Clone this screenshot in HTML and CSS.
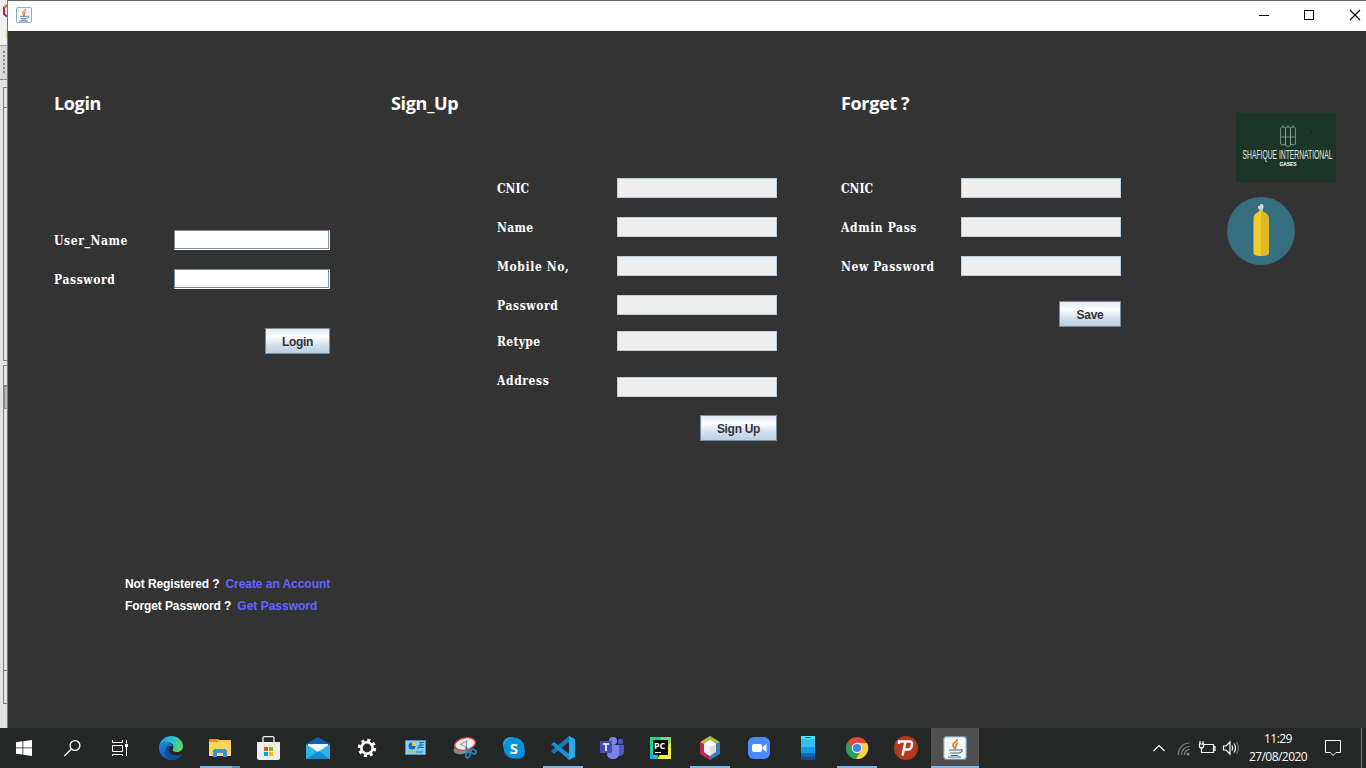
FILE: index.html
```html
<!DOCTYPE html>
<html lang="en">
<head>
<meta charset="utf-8">
<title>Login</title>
<link rel="stylesheet" href="styles.css">
</head>
<body>
<div class="desktop">
  <div class="behind">
    <div class="behind-menu"><svg width="7" height="45" viewBox="0 0 7 45"><path d="M7 5.500L4 7.500v6.500L7 16.500" fill="none" stroke="#c2185b" stroke-width="2"/><path d="M4 7l3-2.500" stroke="#a8b92e" stroke-width="2"/><path d="M7 30v8" stroke="#c6bd50"/></svg></div>
    <div class="behind-tools"><div class="grip"></div></div>
    <div class="pane pane-top"><div class="pane-head"></div></div>
    <div class="pane pane-bottom"><div class="pane-head"></div><div class="pane-tab"></div><div class="pane-body"></div></div>
  </div>
  <div class="window">
    <div class="titlebar">
      <svg class="app-icon" width="16" height="16" viewBox="0 0 24 24"><use href="#java"/></svg>
      <svg class="controls" width="108" height="30" viewBox="0 0 108 30" fill="none" stroke="#000" shape-rendering="crispEdges"><path d="M1 14.500h10M46.500 9.500h9v9h-9z"/><path d="M92 9l10 10M102 9l-10 10" shape-rendering="auto" stroke-width="1.100"/></svg>
    </div>
    <div class="content">
      <section class="login">
        <h2>Login</h2>
        <div class="row first"><label>User_Name</label><input class="field active"></div>
        <div class="row"><label>Password</label><input class="field active" type="password"></div>
        <button class="btn btn-login">Login</button>
        <div class="links">
          <p>Not Registered ?<a class="create">Create an Account</a></p>
          <p>Forget Password ?<a class="get">Get Password</a></p>
        </div>
      </section>
      <section class="signup">
        <h2>Sign_Up</h2>
        <div class="signup-form">
          <div class="row"><label class="caps">CNIC</label><input class="field" disabled></div>
          <div class="row"><label class="short">Name</label><input class="field" disabled></div>
          <div class="row"><label>Mobile No,</label><input class="field" disabled></div>
          <div class="row"><label>Password</label><input class="field" disabled></div>
          <div class="row tight"><label class="short">Retype</label><input class="field" disabled></div>
          <div class="row uneven"><label>Address</label><input class="field" disabled></div>
          <button class="btn btn-signup">Sign Up</button>
        </div>
      </section>
      <section class="forget">
        <h2>Forget ?</h2>
        <div class="forget-form">
          <div class="row"><label class="caps">CNIC</label><input class="field" disabled></div>
          <div class="row"><label>Admin Pass</label><input class="field" disabled></div>
          <div class="row"><label>New Password</label><input class="field" disabled></div>
          <button class="btn btn-save">Save</button>
        </div>
      </section>
      <aside class="brand">
        <svg class="brand-logo" width="100" height="69" viewBox="0 0 100 69">
          <rect width="100" height="69" fill="#1c3529"/>
          <g fill="none" stroke="#8fa99c" stroke-width=".8"><path d="M44.500 15.500q0-1.500 2.500-1.500t2.500 1.500v15.500q-2.500 2-5 0zM49.500 15.500q0-1.500 2.500-1.500t2.500 1.500v17q-2.500 2-5 0zM54.500 15.500q0-1.500 2.500-1.500t2.500 1.500v15.500q-2.500 2-5 0zM45 24h14M46 13h2M51 13h2M56 13h2"/></g>
          <circle cx="75.500" cy="18.500" r=".7" fill="#0b1912"/>
          <text class="brand-name" x="6.500" y="46" textLength="90" lengthAdjust="spacingAndGlyphs">SHAFIQUE INTERNATIONAL</text>
          <text class="brand-sub" x="43.500" y="53" textLength="17" lengthAdjust="spacing">GASES</text>
        </svg>
        <svg class="cylinder" width="68" height="68" viewBox="0 0 68 68"><circle cx="34" cy="34" r="34" fill="#367080"/><path d="M32.500 15V12l-3-1V9h3l1-2h2l1 2v2l-1 1v3z" fill="#cbd5da"/><path d="M29 9h2v3h-2z" fill="#53606a"/><path d="M34 13q-2 0-2.500 2-5 1.500-5 7v34q0 3 7.500 3z" fill="#efcb2c"/><path d="M34 13q2 0 2.500 2 5.500 1.500 5.500 7v34q0 3-8 3z" fill="#dcb827"/></svg>
      </aside>
    </div>
  </div>
  <div class="taskbar">
    <div class="task"><svg width="24" height="24" viewBox="0 0 24 24" fill="#fff"><path d="M4 6.300l6.500-1v6.200H4zM11.300 5.200L20 4v7.500h-8.700zM4 12.300h6.500v6.300L4 17.700zM11.300 12.300H20V20l-8.700-1.300z"/></svg></div>
    <div class="task"><svg width="24" height="24" viewBox="0 0 24 24" fill="none" stroke="#fff" stroke-width="1.300"><circle cx="15" cy="9.500" r="4.900"/><path d="M11.400 13L4.300 20"/></svg></div>
    <div class="task"><svg width="24" height="24" viewBox="0 0 24 24" fill="none" stroke="#fff"><path d="M4.500 4v2.500h10V4M4.500 9.500h10v6h-10zM4.500 20v-1.500h10V20M18.500 4v3.500M18.500 11v9"/><path d="M17 8h3v3h-3z" fill="#fff" stroke="none"/></svg></div>
    <div class="apps">
      <div class="task"><svg width="24" height="24" viewBox="0 0 24 24"><defs><linearGradient id="eg" x1="0" x2="1" y1=".5" y2=".7"><stop stop-color="#289dda"/><stop offset=".5" stop-color="#2bbfd2"/><stop offset="1" stop-color="#65d84b"/></linearGradient><linearGradient id="eb" y2="1" x2=".5"><stop stop-color="#178be0"/><stop offset="1" stop-color="#0c55ad"/></linearGradient></defs><path d="M0 11C1 4 6 0 12 0c7 0 12 5 12 10 0 4-3 6-6 6-3 0-5-1-4-3 2-4-2-7-7-7-4 0-6 2-7 5z" fill="url(#eg)"/><path d="M0 12c0-4 3-6 7-6 3 0 6 2 7 5-3-2-6-1-6 2 0 6 8 9 15 5-4 7-12 8-17 4-4-2-6-6-6-10z" fill="url(#eb)"/><path d="M8.500 10C4 14 6 22 13 24c4 0 8-2 10-6-5 3-12 1-13-3-.5-2 0-3 1-4z" fill="#104b96"/></svg></div>
      <div class="task open explorer"><svg width="24" height="24" viewBox="0 0 24 24"><path d="M1 3h9l1 1h12v16H1z" fill="#f7c64b"/><path d="M1 3h9v3H1z" fill="#df9812"/><path d="M1 6h22v14H1z" fill="#ffd569"/><path d="M5 21v-6q0-2 2-2h10q2 0 2 2v6h-4v-4H9v4z" fill="#3d94d2"/></svg></div>
      <div class="task"><svg width="24" height="24" viewBox="0 0 24 24"><path d="M6 7V2q0-1.400 1.500-1.400h8Q17 .6 17 2v5" fill="none" stroke="#eee" stroke-width="1.300"/><path d="M0 6h23v16q0 2-2 2H2q-2 0-2-2z" fill="#ededed"/><path d="M7 11h4v4H7z" fill="#f15022"/><path d="M12 11h4v4h-4z" fill="#80bc00"/><path d="M7 16h4v4H7z" fill="#00a3ec"/><path d="M12 16h4v4h-4z" fill="#ffb901"/></svg></div>
      <div class="task"><svg width="24" height="24" viewBox="0 0 24 24"><path d="M0 8l12-7 12 7v7H0z" fill="#0b61b7"/><path d="M2 8h20v8H2z" fill="#f3f3f3"/><path d="M0 8l12 8 12-8v15H0z" fill="#2eb3ed"/><path d="M0 23l13-8L24 23z" fill="#168bd5"/></svg></div>
      <div class="task"><svg width="24" height="24" viewBox="0 0 24 24"><circle cx="12" cy="12" r="7.700" fill="none" stroke="#fff" stroke-width="3" stroke-dasharray="3.024 3.024"/><circle cx="12" cy="12" r="5.700" fill="none" stroke="#fff" stroke-width="2.600"/></svg></div>
      <div class="task"><svg width="24" height="24" viewBox="0 0 24 24"><rect x="1.500" y="4.500" width="20" height="14" fill="#86d0f8" stroke="#3b9ad5"/><circle cx="8" cy="10" r="3.500" fill="#176eac"/><path d="M8 10V6a4 4 0 0 1 4 4z" fill="#ffc33b"/><path d="M13 12h2V9h5M15 6.500h5M15 11.500h5M17 6v6" stroke="#1870ac" fill="none"/><path d="M4 16h7" stroke="#e49b35"/><path d="M12 16h7" stroke="#2070a3"/></svg></div>
      <div class="task"><svg width="24" height="24" viewBox="0 0 24 24"><ellipse cx="9" cy="13" rx="8.500" ry="5" transform="rotate(-12 9 13)" fill="#888"/><ellipse cx="12" cy="8" rx="10.500" ry="6" transform="rotate(-12 12 8)" fill="#eee" stroke="#d84545" stroke-width="1.300"/><path d="M7 8l8 4M14 4l-1 9M8 8l6-3" stroke="#85959c" fill="none"/><g fill="none" stroke="#2588c7" stroke-width="1.700"><path d="M13 11l2 5 4-1"/><ellipse cx="15" cy="19" rx="2" ry="3" transform="rotate(20 15 19)"/><ellipse cx="20.500" cy="15.500" rx="2.700" ry="2" transform="rotate(25 20.500 15.500)"/></g></svg></div>
      <div class="task"><svg width="24" height="24" viewBox="0 0 24 24"><circle cx="8.500" cy="8.500" r="7.500" fill="#28a8ea"/><circle cx="16" cy="16" r="7" fill="#0786cf"/><circle cx="12" cy="12" r="10.500" fill="#0794dc"/><text class="skype-s" x="12" y="17.500" text-anchor="middle">S</text></svg></div>
      <div class="task open"><svg width="24" height="24" viewBox="0 0 24 24"><path d="M0 15l18-15v6L3 18z" fill="#107abb"/><path d="M0 8l3-2 15 12v6z" fill="#1490dc"/><path d="M18 0l6 3v18l-6 3z" fill="#29a9f2"/></svg></div>
      <div class="task"><svg width="24" height="24" viewBox="0 0 24 24"><circle cx="13" cy="5" r="4" fill="#7b83eb"/><circle cx="20.500" cy="5.500" r="2.700" fill="#5059c9"/><path d="M16 9h8v7q0 4-6 4z" fill="#5059c9"/><path d="M7 9h12v8q0 6-6 6t-6-6z" fill="#7b83eb"/><rect y="5" width="12" height="12" fill="#454db6"/><path d="M3 8h6M6 8v7" stroke="#fff" stroke-width="1.600"/></svg></div>
      <div class="task"><svg width="24" height="24" viewBox="0 0 24 24"><path d="M1 1h13L8 23H1z" fill="#21d789"/><path d="M12 1h10v9L12 13z" fill="#69df76"/><path d="M22 6v17H8l5-7z" fill="#f3ed42"/><path d="M1 15l7 8H1z" fill="#14b8df"/><rect x="4" y="4" width="15" height="15" fill="#080808"/><text class="pc-text" x="5" y="12.500">PC</text><path d="M6 16.500h6" stroke="#fff"/></svg></div>
      <div class="task open"><svg width="24" height="24" viewBox="0 0 24 24"><path d="M2 6l10-6 10 6-10 6z" fill="#acc142"/><path d="M2 6l10 6v12L2 18z" fill="#bc2953"/><path d="M22 6l-10 6v12l10-6z" fill="#377bb9"/><path d="M6 8l6-4 6 4v8l-6 4-6-4z" fill="#ddd"/><path d="M6 8l6-4 6 4-6 3z" fill="#fff"/><path d="M6 8l6 3v9l-6-4z" fill="#f4f4f4"/></svg></div>
      <div class="task"><svg width="24" height="24" viewBox="0 0 24 24"><rect x="1" y="1" width="22" height="22" rx="6" fill="#4a8cff"/><rect x="5" y="8" width="10" height="8" rx="2" fill="#fff"/><path d="M15.500 11l4-3v8l-4-3z" fill="#fff"/></svg></div>
      <div class="task"><svg width="24" height="24" viewBox="0 0 24 24"><path d="M5 0h14v24H5z" fill="#35c1f1"/><path d="M5 0h14v3H5z" fill="#50e6ff"/><path d="M5 11h14v6H5z" fill="#199be2"/><path d="M5 17h14v4H5z" fill="#0669bc"/><path d="M5 21h14v3H5z" fill="#114a8b"/><path d="M9 1.500h6" stroke="#0879ac"/></svg></div>
      <div class="task open"><svg width="24" height="24" viewBox="0 0 24 24"><circle cx="12" cy="12" r="11" fill="#df483b"/><path d="M2.500 6.500l6.300 8 5.200 2-3 6.500A11 11 0 0 1 2.500 6.500z" fill="#24a35b"/><path d="M12 7h10a11 11 0 0 1-11 16l5.500-9z" fill="#ffcf46"/><circle cx="12" cy="12" r="5.300" fill="#eef5ff"/><circle cx="12" cy="12" r="4.100" fill="#4286ee"/></svg></div>
      <div class="task"><svg width="24" height="24" viewBox="0 0 24 24"><circle cx="12" cy="12" r="12" fill="#b33a1e"/><path d="M5 8V5.500h10.500q3 0 2.500 3l-.4 2q-.6 3-3.600 3H10.500M11.500 6L8.500 19.500" fill="none" stroke="#fff" stroke-width="2.500"/></svg></div>
      <div class="task open current"><svg width="24" height="24" viewBox="0 0 24 24"><g id="java"><rect x=".7" y=".7" width="22.600" height="22.600" rx="2.500" fill="#f4f7f8" stroke="#7395a9" stroke-width="1.200"/><path d="M14 3c1 3-5 4-4 6 0 2 2 2 1 4M15 7c-4 2-1 3-3 6" fill="none" stroke="#ed7b22" stroke-width="1.700"/><path d="M6 14h11M7 17h9M8 19.500h7M5 21h13M17 14q3-1 2 1-1 2-3 2" fill="none" stroke="#496f8b" stroke-width="1.200"/></g></svg></div>
    </div>
    <div class="tray">
      <svg width="92" height="24" viewBox="0 0 92 24" fill="none" stroke="#fff" stroke-width="1.200"><path d="M3.500 15L9 9.500 14.500 15"/><g stroke="#858585"><path d="M28.500 19A11 11 0 0 1 39.500 7M31.500 19a8 8 0 0 1 8-8.500M34.500 19q0-5 5-5.500"/><circle cx="38" cy="18" r="1" fill="#999"/></g><path d="M54 8.500h9.500v8h-10M63.500 10.500h1.500v4h-1.500M50 5v3M53 5v3M49.500 8h4v3q-2 2-4 0zM51.500 12v4.500h3"/><path d="M73.500 10h2.500l4-4v12l-4-4h-2.500zM82 9.500q1.500 2.500 0 5M84 7.500q3 4.500 0 9"/><path d="M86.500 6q4 6 0 12" stroke="#777"/></svg>
      <div class="clock"><span class="time">11:29</span><span class="date">27/08/2020</span></div>
      <svg class="notice" width="20" height="20" viewBox="0 0 20 20" fill="none" stroke="#fff"><path d="M2.500 2.500h15v12h-4.500L10 17.500l-2.500-3h-5z"/></svg>
      <div class="show-desktop"></div>
    </div>
  </div>
</div>
</body>
</html>
```
FILE: styles.css
```css
* { box-sizing: border-box; }
body { margin: 0; overflow: hidden; font-family: "Liberation Sans", sans-serif; }
.desktop { width: 1366px; height: 768px; display: grid; grid-template: 728px 40px / 8px 1358px; }
.behind { background: #e3e3e3; border-right: 1px solid #777; }
.behind-menu { height: 45px; background: #f0f0f0; }
.behind-menu svg { display: block; }
.behind-tools { height: 35px; border-top: 1px solid #999; border-bottom: 1px solid #888; background: #d9d9d9; padding: 5px 0 0 3px; }
.grip { width: 2px; height: 24px; background: repeating-linear-gradient(#888 0 2px, transparent 2px 4px); }
.pane { margin-left: 3px; border: 1px solid #808080; border-right: 0; }
.pane-top { margin-top: 7px; height: 274px; }
.pane-head { height: 20px; border-bottom: 1px solid #808080; }
.pane-bottom { margin-top: 4px; height: 339px; }
.pane-tab { height: 23px; border: 1px solid #909090; border-right: 0; background: #b9b9b9; }
.pane-body { height: 262px; border-bottom: 1px solid #808080; }
.window { border-top: 1px solid #666; background: #333; }
.titlebar { height: 30px; background: #fff; display: flex; justify-content: space-between; }
.app-icon { margin: 6px 0 0 8px; }
.content { height: 697px; display: flex; color: #fff; }
section { padding-top: 60px; display: flex; flex-direction: column; flex: none; }
.login { width: 276px; margin-left: 46px; align-items: flex-start; }
.signup { width: 386px; margin-left: 61px; }
.signup-form { width: 280px; margin: 63px 0 0 106px; display: flex; flex-direction: column; }
.forget { width: 280px; margin-left: 64px; }
.forget-form { margin-top: 63px; display: flex; flex-direction: column; }
h2 { margin: 0; height: 24px; font: bold 18px/24px "Open Sans", sans-serif; letter-spacing: -.35px; white-space: nowrap; }
.row { display: flex; justify-content: space-between; width: 100%; height: 20px; margin-bottom: 19px; }
.row.first { margin-top: 115px; }
.row:has(+ .tight) { margin-bottom: 16px; }
.row.uneven { height: 27px; margin-bottom: 18px; }
.row.uneven .field { align-self: flex-end; }
label { height: 20px; font: bold 12px/22px "DejaVu Serif Condensed", "DejaVu Serif", serif; font-stretch: condensed; letter-spacing: .6px; white-space: nowrap; }
.short { letter-spacing: .3px; }
.caps { letter-spacing: 0; }
.field { width: 160px; height: 20px; border: 1px solid #b8cfe5; background: #eee; border-radius: 0; padding: 0; outline: none; }
.field.active { width: 156px; border: 1px solid #7a8a99; border-right-color: #fff; border-bottom-color: #fff; background: #fff; box-shadow: inset -1px -1px #7a8a99; }
.btn { height: 26px; padding: 2px 0 0; border: 1px solid #7a8a99; border-radius: 0; background: linear-gradient(#dfe9f3 0, #fff 30%, #d4e1ee 65%, #b8cfe5 100%); color: #333; font: bold 12px "Liberation Sans", sans-serif; letter-spacing: -.3px; align-self: flex-end; }
.btn-login { width: 65px; margin-top: 20px; }
.btn-signup { width: 77px; }
.btn-save { width: 62px; margin-top: 6px; }
.links { margin: 219px 0 0 71px; font: bold 12px/22px "Liberation Sans", sans-serif; white-space: nowrap; letter-spacing: -.1px; }
.links p { margin: 0; }
.links a { color: #6464ff; margin-left: 6px; }
.links .create { letter-spacing: -.05px; }
.links .get { letter-spacing: 0; }
.brand { width: 109px; margin: 82px 0 0 106px; display: flex; flex-direction: column; gap: 15px; flex: none; }
.brand-logo { margin-left: 9px; }
.brand svg { display: block; }
.brand-name { font: 13px "Liberation Sans", sans-serif; fill: #e0e7e3; }
.brand-sub { font: bold 5px "Liberation Sans", sans-serif; fill: #fff; }
.taskbar { grid-column: 1 / 3; display: flex; background: #252626; color: #fff; }
.apps { margin-left: 3px; display: flex; gap: 1px; }
.task { width: 48px; height: 40px; display: flex; flex-direction: column; align-items: center; padding-top: 8px; flex: none; }
.task svg { display: block; flex: none; }
.open::after { content: ""; width: 40px; height: 2px; margin-top: 6px; background: #76b9ed; }
.explorer::after { background: linear-gradient(to right, #76b9ed 32px, #568db8 32px); }
.current { background: #505050; }
.current::after { width: 48px; }
.skype-s { font: bold 15px "Open Sans", sans-serif; fill: #fff; }
.pc-text { font: bold 9px "Open Sans", sans-serif; fill: #fff; letter-spacing: -.2px; }
.tray { flex: 1; display: flex; padding-left: 171px; }
.tray > svg { margin-top: 8px; flex: none; }
.clock { width: 72px; display: flex; flex-direction: column; align-items: center; padding-top: 2px; font: 12px/18px "Open Sans", sans-serif; letter-spacing: -.55px; }
.tray .notice { margin: 10px 0 0 9px; }
.show-desktop { width: 1px; margin-left: 18px; background: #777; }
```
